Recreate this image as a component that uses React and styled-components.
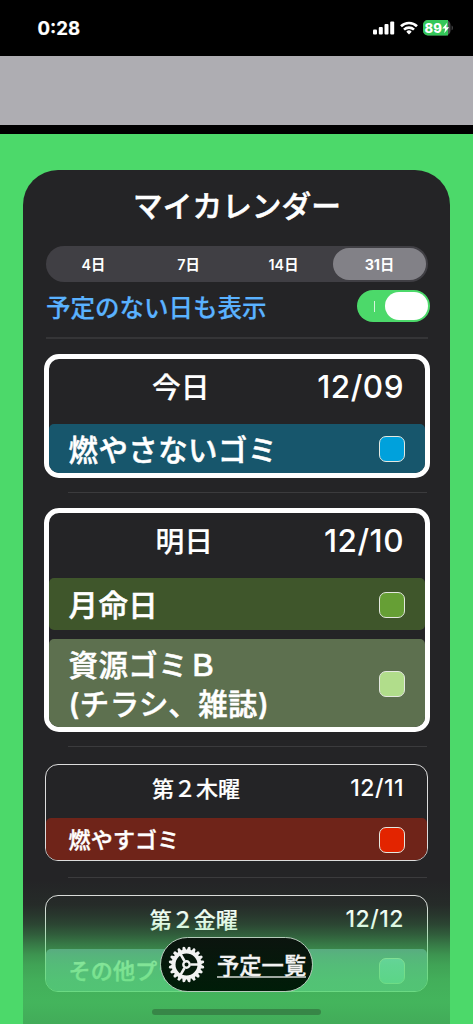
import React from "react";
import styled, { createGlobalStyle } from "styled-components";

const GlobalStyle = createGlobalStyle`
  * {
    box-sizing: border-box;
  }
  body {
    margin: 0;
    background: #4cd96a;
    font-family: Inter, "Noto Sans CJK JP", sans-serif;
    color: #fff;
    overflow: hidden;
  }
`;

const Screen = styled.div`
  position: relative;
  display: flex;
  flex-direction: column;
  width: 473px;
  height: 1024px;
  overflow: hidden;
  background: #4cd96a;
`;

const StatusBar = styled.header`
  display: flex;
  flex: none;
  align-items: center;
  justify-content: space-between;
  height: 56px;
  padding: 0 19px 0 37.5px;
  background: #000;
`;

const Clock = styled.span`
  font-size: 18.6px;
  font-weight: 700;
  -webkit-text-stroke: 0.2px #fff;
`;

const StatusIcons = styled.div`
  display: flex;
  align-items: center;
  gap: 5px;
`;

const AdBanner = styled.div`
  flex: none;
  height: 78px;
  background: #aeadb2;
  border-bottom: 9px solid #000;
`;

const Panel = styled.main`
  display: flex;
  flex: none;
  flex-direction: column;
  width: 427px;
  height: 870px;
  margin: 36px 0 0 23px;
  padding: 0 20px;
  background: #242426;
  border-radius: 35px 35px 0 0;
`;

const Title = styled.h1`
  margin: 0;
  height: 76px;
  padding-left: 1px;
  line-height: 73px;
  font-size: 29.7px;
  font-weight: 500;
  text-align: center;
  -webkit-text-stroke: 0.5px #fff;
`;

const Segments = styled.div`
  display: grid;
  grid-template-columns: repeat(4, 1fr);
  flex: none;
  height: 36px;
  margin: 0 2px 0 3px;
  padding: 2px 2px 2px 0;
  border-radius: 18px;
  background: #403f44;
`;

const Segment = styled.button`
  margin-left: ${(p) => (p.$active ? 2 : 0)}px;
  border: 0;
  padding: 0 0 2px;
  border-radius: 16px;
  background: ${(p) => (p.$active ? "#828187" : "transparent")};
  color: #fff;
  font-family: inherit;
  font-size: 14.3px;
  font-weight: ${(p) => (p.$active ? 700 : 600)};
`;

const ToggleRow = styled.div`
  display: flex;
  flex: none;
  align-items: center;
  justify-content: space-between;
  height: 57px;
  margin: 0 2px 15px 3px;
  padding-bottom: 7px;
  border-bottom: 2px solid #353537;
`;

const ToggleLabel = styled.span`
  padding-top: 3px;
  color: #5ab2ff;
  font-size: 24.5px;
  font-weight: 500;
  line-height: 32px;
  -webkit-text-stroke: 0.2px #5ab2ff;
`;

const Toggle = styled.span`
  display: flex;
  align-items: center;
  justify-content: space-between;
  width: 73px;
  height: 32px;
  margin-right: -2px;
  padding: 0 2px 0 17px;
  border-radius: 16px;
  background: #4cd96a;
`;

const OnMark = styled.i`
  width: 1px;
  height: 11px;
  background: #d5f6dc;
`;

const Knob = styled.i`
  width: 43px;
  height: 28px;
  border-radius: 14px;
  background: #fff;
`;

const Divider = styled.hr`
  flex: none;
  width: 359px;
  height: 1px;
  margin: ${(p) => p.$above}px 0 ${(p) => p.$below}px 25px;
  border: 0;
  background: #3b3b3d;
`;

const DayCard = styled.section`
  display: flex;
  flex: none;
  flex-direction: column;
  margin: ${(p) => (p.$large ? "0 0.5px" : "0 2px")};
  border: ${(p) => (p.$large ? "5px solid #fff" : "1px solid #dcdcdc")};
  border-radius: ${(p) => (p.$large ? 15 : 13)}px;
  overflow: hidden;
`;

const DayHeader = styled.div`
  display: flex;
  align-items: center;
  height: ${(p) => (p.$large ? 65 : 53)}px;
  padding: ${(p) => (p.$large ? "0 20.5px 11px 0" : "0 23px 7px 0")};
  font-size: ${(p) => (p.$large ? 28.8 : 22)}px;
  font-weight: 500;
`;

const DayName = styled.span`
  flex: 1;
  padding: 0 4px 2px 0;
  text-align: center;
  -webkit-text-stroke: 0.2px #fff;
`;

const DayDate = styled.span`
  font-size: ${(p) => (p.$large ? 31.5 : 23)}px;
  letter-spacing: 0.5px;
`;

const Events = styled.div`
  display: flex;
  flex-direction: column;
  gap: 9px;
`;

const EventRow = styled.div`
  display: flex;
  align-items: center;
  justify-content: space-between;
  height: ${(p) => p.$height}px;
  padding: ${(p) => (p.$large ? "1px 20px 0 20px" : "1px 22px 0 22.5px")};
  border-radius: 5px;
  background: ${(p) => p.$color};
  font-size: ${(p) => (p.$large ? 29.4 : 22)}px;
  font-weight: 500;
  letter-spacing: ${(p) => (p.$large ? 0.5 : 0.2)}px;
  line-height: ${(p) => (p.$large ? 39 : 30)}px;
  white-space: pre-line;
  -webkit-text-stroke: ${(p) => (p.$large ? 0.5 : 0.4)}px #fff;
`;

const EventTitle = styled.span`
  padding-top: ${(p) => (p.$large ? 2 : 0)}px;
`;

const Swatch = styled.i`
  flex: none;
  width: 26px;
  height: 26px;
  border: 1px solid #e4e8e0;
  border-radius: 7px;
  background: ${(p) => p.$color};
`;

const BottomGlow = styled.div`
  position: absolute;
  left: 23px;
  bottom: 0;
  width: 427px;
  height: 144px;
  background: linear-gradient(
    rgba(76, 217, 106, 0) 0%,
    rgba(76, 217, 106, 0.04) 17%,
    rgba(76, 217, 106, 0.1) 24%,
    rgba(76, 217, 106, 0.19) 31%,
    rgba(76, 217, 106, 0.32) 38%,
    rgba(76, 217, 106, 0.48) 45%,
    rgba(76, 217, 106, 0.62) 52%,
    rgba(76, 217, 106, 0.7) 59%,
    rgba(76, 217, 106, 0.77) 70%,
    rgba(76, 217, 106, 0.8) 85%,
    rgba(76, 217, 106, 0.75) 100%
  );
`;

const ListButton = styled.button`
  position: absolute;
  left: 160px;
  top: 937px;
  display: flex;
  align-items: center;
  gap: 12px;
  width: 153px;
  height: 55px;
  padding: 0 0 0 7px;
  border: 1.5px solid #b5c9ba;
  border-radius: 28px;
  background: linear-gradient(#0b140e, #001d08);
  color: #f2f2f2;
  font-family: inherit;
  font-size: 22.3px;
  font-weight: 500;
`;

const ListLabel = styled.span`
  padding-top: 3px;
  line-height: 21px;
  border-bottom: 2px solid #9fa8a1;
  -webkit-text-stroke: 0.3px #f2f2f2;
`;

const HomeIndicator = styled.div`
  position: absolute;
  left: 152px;
  bottom: 9px;
  width: 169px;
  height: 6px;
  border-radius: 3px;
  background: #378647;
`;

const days = [
  {
    name: "今日",
    date: "12/09",
    large: true,
    events: [
      { title: "燃やさないゴミ", bar: "#17566c", color: "#00a1dc", height: 49 },
    ],
  },
  {
    name: "明日",
    date: "12/10",
    large: true,
    gap: [14, 15],
    events: [
      { title: "月命日", bar: "#3f562b", color: "#669f35", height: 52 },
      {
        title: "資源ゴミＢ\n(チラシ、雑誌)",
        bar: "#5d704f",
        color: "#b1dd8b",
        height: 88,
      },
    ],
  },
  {
    name: "第２木曜",
    date: "12/11",
    gap: [14, 17],
    events: [
      { title: "燃やすゴミ", bar: "#6f2419", color: "#e32400", height: 42 },
    ],
  },
  {
    name: "第２金曜",
    date: "12/12",
    gap: [16, 17],
    events: [
      { title: "その他プラ", bar: "#68779a", color: "#93c9ee", height: 42 },
    ],
  },
];

function SignalIcon() {
  return (
    <svg width="22" height="14" viewBox="0 0 22 14" fill="#fff">
      <rect x="0" y="8.5" width="4" height="5" rx="1" />
      <rect x="5.8" y="6" width="4" height="7.5" rx="1" />
      <rect x="11.5" y="3" width="4" height="10.5" rx="1" />
      <rect x="17.2" y="0.5" width="4" height="13" rx="1" />
    </svg>
  );
}

function WifiIcon() {
  return (
    <svg width="18" height="14" viewBox="0 0 18 14" fill="none">
      <g stroke="#fff" strokeWidth="2.6">
        <path d="M1 5.3a11.4 11.4 0 0 1 16 0" />
        <path d="M4 8.6a7.2 7.2 0 0 1 10 0" />
      </g>
      <path d="M9 13.4 6.3 10.7a3.8 3.8 0 0 1 5.4 0z" fill="#fff" />
    </svg>
  );
}

function BatteryIcon() {
  return (
    <svg width="31" height="16" viewBox="0 0 31 16">
      <rect width="27.5" height="15.5" rx="4.8" fill="#4b4b4d" />
      <path
        d="M4.8 0H25v15.5H4.8A4.8 4.8 0 0 1 0 10.7V4.8A4.8 4.8 0 0 1 4.8 0z"
        fill="#34c759"
      />
      <path d="M28.6 5.4c1.7.6 1.7 4.2 0 4.8z" fill="#4b4b4d" />
      <text
        x="1.6"
        y="12.5"
        fontSize="13"
        fontWeight="800"
        fill="#fff"
        fontFamily="Inter"
      >
        89
      </text>
      <path d="M24.2 2.8 19.2 8.6h3l-1 4.6 5-6h-3z" fill="#fff" />
    </svg>
  );
}

function GearIcon() {
  const teeth = Array.from({ length: 20 }, (_, i) => 9 + i * 18);
  return (
    <svg width="37" height="37" viewBox="-18.5 -18.5 37 37">
      <g fill="#f2f2f2">
        {teeth.map((deg) => (
          <path
            key={deg}
            d="M-1.9-14.3-1.3-17.3Q0-18.6 1.3-17.3L1.9-14.3z"
            transform={`rotate(${deg})`}
          />
        ))}
      </g>
      <g fill="none" stroke="#f2f2f2" strokeWidth="2.6">
        <circle r="13" strokeWidth="4" />
        <circle r="3.2" strokeWidth="2.4" />
        <path d="M4 0H12M-2-3.5-6-10.4M-2 3.5-6 10.4" />
      </g>
    </svg>
  );
}

function Day({ name, date, large, events }) {
  return (
    <DayCard $large={large}>
      <DayHeader $large={large}>
        <DayName>{name}</DayName>
        <DayDate $large={large}>{date}</DayDate>
      </DayHeader>
      <Events>
        {events.map((e) => (
          <EventRow
            key={e.title}
            $large={large}
            $color={e.bar}
            $height={e.height}
          >
            <EventTitle $large={large}>{e.title}</EventTitle>
            <Swatch $color={e.color} />
          </EventRow>
        ))}
      </Events>
    </DayCard>
  );
}

export default function App() {
  return (
    <Screen>
      <GlobalStyle />
      <StatusBar>
        <Clock>0:28</Clock>
        <StatusIcons>
          <SignalIcon />
          <WifiIcon />
          <BatteryIcon />
        </StatusIcons>
      </StatusBar>
      <AdBanner />
      <Panel>
        <Title>マイカレンダー</Title>
        <Segments>
          {["4日", "7日", "14日", "31日"].map((label) => (
            <Segment key={label} $active={label === "31日"}>
              {label}
            </Segment>
          ))}
        </Segments>
        <ToggleRow>
          <ToggleLabel>予定のない日も表示</ToggleLabel>
          <Toggle>
            <OnMark />
            <Knob />
          </Toggle>
        </ToggleRow>
        {days.map((day) => (
          <React.Fragment key={day.date}>
            {day.gap && <Divider $above={day.gap[0]} $below={day.gap[1]} />}
            <Day {...day} />
          </React.Fragment>
        ))}
      </Panel>
      <BottomGlow />
      <ListButton>
        <GearIcon />
        <ListLabel>予定一覧</ListLabel>
      </ListButton>
      <HomeIndicator />
    </Screen>
  );
}
